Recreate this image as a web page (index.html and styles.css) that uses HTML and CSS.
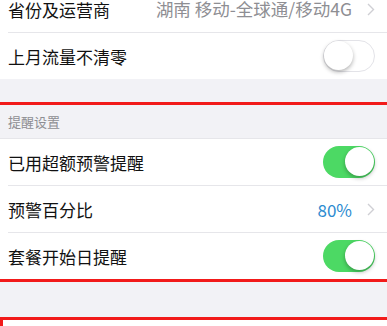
FILE: index.html
```html
<!DOCTYPE html>
<html>
<head>
    <meta charset="utf-8">
    <title>流量设置</title>
    <link rel="stylesheet" href="styles.css">
</head>
<body>
    <div class="page">
        <div class="group">
            <div class="row">
                <span class="label">省份及运营商</span>
                <span class="value">湖南 移动-全球通/移动4G</span>
                <svg class="chev" width="8" height="13" viewBox="0 0 8 13"><path d="M1 1l5.5 5.5L1 12" fill="none" stroke="#cfcfd4" stroke-width="1.4"/></svg>
            </div>
            <div class="row">
                <span class="label">上月流量不清零</span>
                <div class="switch off"><span class="knob"></span></div>
            </div>
        </div>

        <div class="gap"></div>

        <div class="marked">
            <div class="header">提醒设置</div>
            <div class="group">
                <div class="row">
                    <span class="label">已用超额预警提醒</span>
                    <div class="switch on"><span class="knob"></span></div>
                </div>
                <div class="row">
                    <span class="label">预警百分比</span>
                    <span class="value blue">80%</span>
                    <svg class="chev" width="8" height="13" viewBox="0 0 8 13"><path d="M1 1l5.5 5.5L1 12" fill="none" stroke="#cfcfd4" stroke-width="1.4"/></svg>
                </div>
                <div class="row">
                    <span class="label">套餐开始日提醒</span>
                    <div class="switch on"><span class="knob"></span></div>
                </div>
            </div>
        </div>

        <div class="spacer"></div>
        <div class="next-box"></div>
    </div>
</body>
</html>
```

FILE: styles.css
```css
body {
    margin: 0;
    background-color: #fff;
    font-family: "Noto Sans CJK SC", "Noto Sans", sans-serif;
    overflow: hidden;
}

.page {
    margin-top: -14px;
}

.group {
    background-color: #fff;
}

.row {
    height: 46px;
    margin-left: 8px;
    padding-right: 12px;
    display: flex;
    align-items: center;
    border-bottom: 1px solid #e6e6ea;
}

.row:last-child {
    border-bottom: none;
}

.label {
    flex: 1;
    font-size: 17px;
    line-height: 1;
    color: #111;
}

.value {
    font-size: 17.5px;
    line-height: 1;
    color: #8e8e93;
}

.value.blue {
    color: #2c8bd0;
    font-size: 17px;
}

.chev {
    margin-left: 15px;
    display: block;
}

.switch {
    width: 52px;
    height: 32px;
    border-radius: 16px;
    position: relative;
    box-sizing: border-box;
}

.switch.off {
    border: 1.5px solid #e3e3e8;
    background-color: #fff;
}

.switch.on {
    background-color: #4cd964;
}

.knob {
    position: absolute;
    top: 1px;
    width: 29px;
    height: 29px;
    border-radius: 50%;
    background-color: #fff;
    box-shadow: 0 2px 4px rgba(0, 0, 0, 0.3);
}

.switch.off .knob {
    top: -0.5px;
    left: -0.5px;
}

.switch.on .knob {
    right: 1px;
}

.gap {
    height: 23px;
    background-color: #f2f2f6;
}

.marked {
    border-top: 3px solid #f21a1a;
    border-bottom: 3px solid #f21a1a;
}

.header {
    height: 33px;
    padding-left: 8px;
    display: flex;
    align-items: center;
    background-color: #f2f2f6;
    font-size: 13px;
    line-height: 1;
    color: #8e8e93;
    border-bottom: 1px solid #e6e6ea;
}

.spacer {
    height: 35px;
    background-color: #f2f2f6;
}

.next-box {
    height: 30px;
    background-color: #fff;
    border-top: 3px solid #f21a1a;
    border-left: 3px solid #f21a1a;
}
```
